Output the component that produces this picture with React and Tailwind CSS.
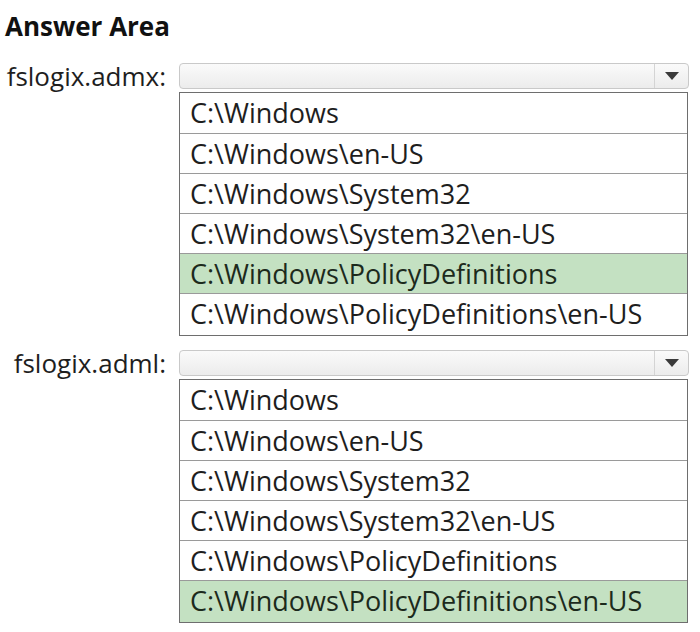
const paths = [
  "C:\\Windows",
  "C:\\Windows\\en-US",
  "C:\\Windows\\System32",
  "C:\\Windows\\System32\\en-US",
  "C:\\Windows\\PolicyDefinitions",
  "C:\\Windows\\PolicyDefinitions\\en-US",
];

const questions = [
  { label: "fslogix.admx:", answer: 4 },
  { label: "fslogix.adml:", answer: 5 },
];

const Caret = () => (
  <svg width="14" height="8" viewBox="0 0 14 8">
    <path d="M0 0 H14 L7 8 Z" fill="#3a3a3a" />
  </svg>
);

const DropDown = ({ label, answer }) => {
  return (
    <div className="flex">
      <div className="w-[179px] shrink-0 pr-[13px] text-right text-[26px] leading-[26px] text-[#1e1e1e]">
        {label}
      </div>
      <div className="w-[510px]">
        <div className="flex h-[26px] rounded-[4px] border border-[#c9c9c9] bg-gradient-to-b from-[#fafafa] to-[#ececec]">
          <div className="flex-1" />
          <div className="flex w-[34px] items-center justify-center border-l border-[#d4d4d4]">
            <Caret />
          </div>
        </div>
        <div className="mt-[3px] w-[509px] border border-[#6e6e6e] bg-white">
          {paths.map((p, i) => (
            <div
              key={p}
              className={
                "pl-[10px] text-[27px] leading-[40px] " +
                (i === 0 || i === paths.length - 1 ? "h-[41px] " : "h-[40px] ") +
                (i < paths.length - 1 ? "border-b border-[#9a9a9a] " : "") +
                (i === answer ? "bg-[#c4e1c2] text-[#1c2a1c]" : "text-[#1e1e1e]")
              }
            >
              {p}
            </div>
          ))}
        </div>
      </div>
    </div>
  );
};

export default function App() {
  return (
    <div
      className="h-[632px] w-[700px] bg-white pt-[10px]"
      style={{ fontFamily: '"Open Sans", "Noto Sans", sans-serif' }}
    >
      <h2 className="pl-[5px] text-[26px] font-bold leading-[32px] text-[#111]">Answer Area</h2>
      <div className="mt-[21px] flex flex-col gap-[14px]">
        {questions.map((q) => (
          <DropDown key={q.label} label={q.label} answer={q.answer} />
        ))}
      </div>
    </div>
  );
}
